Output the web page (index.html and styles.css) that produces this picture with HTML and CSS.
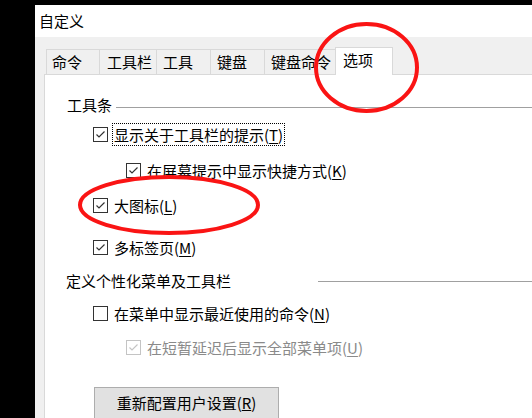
FILE: index.html
```html
<!DOCTYPE html>
<html lang="zh">
<head>
<meta charset="utf-8">
<title>自定义</title>
<link rel="stylesheet" href="styles.css">
</head>
<body>
<div class="screen">
  <div class="window">
    <div class="titlebar">自定义</div>
    <div class="dlg">
      <div class="tabs">
        <div class="tab t1">命令</div>
        <div class="tab t2">工具栏</div>
        <div class="tab t3">工具</div>
        <div class="tab t4">键盘</div>
        <div class="tab t5">键盘命令</div>
        <div class="tab active">选项</div>
      </div>
      <div class="panel">
        <div class="group-head g1"><span>工具条</span><i class="rule"></i></div>
        <div class="row r1">
          <span class="cb"><svg viewBox="0 0 13 13"><polyline points="2.5,6.5 5,9 10.5,3.5"/></svg></span>
          <span class="label focus">显示关于工具栏的提示(<u>T</u>)</span>
        </div>
        <div class="row sub r2">
          <span class="cb"><svg viewBox="0 0 13 13"><polyline points="2.5,6.5 5,9 10.5,3.5"/></svg></span>
          <span class="label">在屏幕提示中显示快捷方式(<u>K</u>)</span>
        </div>
        <div class="row r3">
          <span class="cb"><svg viewBox="0 0 13 13"><polyline points="2.5,6.5 5,9 10.5,3.5"/></svg></span>
          <span class="label">大图标(<u>L</u>)</span>
        </div>
        <div class="row r4">
          <span class="cb"><svg viewBox="0 0 13 13"><polyline points="2.5,6.5 5,9 10.5,3.5"/></svg></span>
          <span class="label">多标签页(<u>M</u>)</span>
        </div>
        <div class="group-head g2"><span>定义个性化菜单及工具栏</span><i class="rule"></i></div>
        <div class="row r5">
          <span class="cb"></span>
          <span class="label">在菜单中显示最近使用的命令(<u>N</u>)</span>
        </div>
        <div class="row sub r6 disabled">
          <span class="cb"><svg viewBox="0 0 13 13"><polyline points="2.5,6.5 5,9 10.5,3.5"/></svg></span>
          <span class="label">在短暂延迟后显示全部菜单项(<u>U</u>)</span>
        </div>
        <div class="btn">重新配置用户设置(<u>R</u>)</div>
      </div>
    </div>
  </div>
  <svg class="marks" viewBox="0 0 532 418" width="532" height="418">
    <ellipse cx="366.5" cy="67.5" rx="50.5" ry="43.5"/>
    <ellipse cx="169" cy="205" rx="89" ry="28"/>
  </svg>
</div>
</body>
</html>
```

FILE: styles.css
```css
* { box-sizing: border-box; }
html, body { margin: 0; padding: 0; }
body {
  background: #000;
  font-family: "Noto Sans CJK SC", "Microsoft YaHei", sans-serif;
  font-size: 15px;
  color: #000;
}
.screen {
  position: relative;
  width: 532px;
  height: 418px;
  overflow: hidden;
  padding: 5px 0 0 35px;
}
.window {
  height: 413px;
  background: #f0f0f0;
  display: flex;
  flex-direction: column;
}
.titlebar {
  height: 32px;
  line-height: 32px;
  background: #fff;
  padding-left: 4px;
}
.dlg {
  flex: 1;
  padding: 10px 0 0 9px;
  display: flex;
  flex-direction: column;
}
.tabs {
  display: flex;
  align-items: flex-end;
  height: 27px;
  margin-left: 2px;
}
.tab {
  height: 25px;
  line-height: 24px;
  border-top: 1px solid #d9d9d9;
  border-left: 1px solid #d9d9d9;
  padding-left: 6px;
  white-space: nowrap;
}
.t1 { width: 53px; padding-left: 5px; }
.t2 { width: 57px; padding-left: 7px; }
.t3 { width: 54px; }
.t4 { width: 54px; }
.t5 { width: 71px; }
.tab.active {
  position: relative;
  z-index: 1;
  width: 58px;
  height: 28px;
  margin-bottom: -1px;
  padding-left: 7px;
  background: #fff;
  border-right: 1px solid #d9d9d9;
}
.panel {
  flex: 1;
  background: #fff;
  border-top: 1px solid #d9d9d9;
  border-left: 1px solid #d9d9d9;
  padding: 20px 0 0 22px;
  display: flex;
  flex-direction: column;
  align-items: flex-start;
}
.group-head {
  display: flex;
  align-items: center;
  height: 20px;
  line-height: 20px;
  align-self: stretch;
}
.group-head .rule {
  flex: 1;
  height: 1px;
  background: #a0a0a0;
  margin-left: 4px;
  margin-top: 4px;
}
.g2 { margin-top: 16px; margin-left: -1px; }
.g2 .rule { margin-left: 87px; margin-top: 0; }
.row {
  display: flex;
  align-items: center;
  height: 15px;
  margin-left: 26px;
}
.row.sub { margin-left: 59px; }
.r1 { margin-top: 12px; }
.r2 { margin-top: 21px; }
.r3 { margin-top: 20px; }
.r4 { margin-top: 27px; }
.r5 { margin-top: 15px; }
.r6 { margin-top: 19px; }
.cb {
  width: 15px;
  height: 15px;
  border: 1px solid #333;
  background: #fff;
  flex: none;
  display: flex;
}
.cb svg {
  width: 13px;
  height: 13px;
  fill: none;
  stroke: #333;
  stroke-width: 1.2;
}
.label {
  margin-left: 6px;
  line-height: 15px;
  white-space: nowrap;
}
.label u { text-underline-offset: 2px; }
.label.focus {
  border: 1px dotted #000;
  padding: 3px 1px;
  margin-top: -4px;
  margin-bottom: -4px;
  margin-left: 4px;
}
.disabled .cb { border-color: #c4c4c4; }
.disabled .cb svg { stroke: #c4c4c4; }
.disabled .label { color: #8a8a8a; }
.btn {
  margin-top: 32px;
  margin-left: 27px;
  width: 185px;
  height: 32px;
  line-height: 30px;
  border: 1px solid #adadad;
  background: #e1e1e1;
  text-align: center;
  white-space: nowrap;
}
.marks {
  position: absolute;
  left: 0;
  top: 0;
  pointer-events: none;
}
.marks ellipse {
  fill: none;
  stroke: #fa1414;
  stroke-width: 4;
}
```
